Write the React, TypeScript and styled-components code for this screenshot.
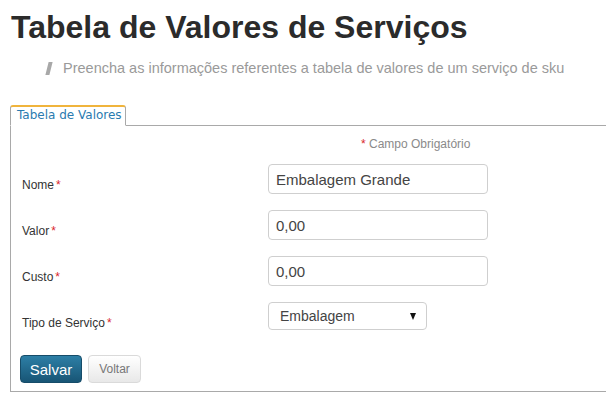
import React from "react";
import styled, { createGlobalStyle } from "styled-components";

const Global = createGlobalStyle`
  html, body { margin: 0; padding: 0; background: #fff; }
  body { font-family: "Liberation Sans", Arial, sans-serif; }
`;

const Page = styled.div`
  width: 606px;
  height: 401px;
  overflow: hidden;
  padding-left: 10px;
  box-sizing: border-box;
`;

const Title = styled.h1`
  margin: 8px 0 0 1px;
  font-size: 32px;
  line-height: 38px;
  font-weight: bold;
  color: #2b2b2b;
`;

const Subtitle = styled.div`
  display: flex;
  align-items: center;
  margin: 14px 0 0 37px;
  font-size: 14.5px;
  line-height: 16px;
  color: #9a9a9a;
`;

const Bar = styled.span`
  display: inline-block;
  width: 4px;
  height: 13px;
  background: #a8a8a8;
  transform: skewX(-14deg);
  margin-right: 12px;
`;

const Tabs = styled.div`
  display: flex;
  margin-top: 29px;
  border-bottom: 1px solid #a9a9a9;
`;

const Tab = styled.div`
  box-sizing: border-box;
  width: 116px;
  height: 21px;
  margin-bottom: -1px;
  border: 1px solid #a9a9a9;
  border-top: 2px solid #f0b43c;
  border-bottom: 1px solid #fff;
  border-radius: 3px 3px 0 0;
  background: #fff;
  font-family: "DejaVu Sans", Verdana, sans-serif;
  font-size: 12px;
  line-height: 16px;
  color: #2a7bb0;
  padding-left: 6px;
`;

const Panel = styled.div`
  border-left: 1px solid #a9a9a9;
  border-bottom: 1px solid #a9a9a9;
  height: 266px;
  box-sizing: border-box;
  padding: 11px 0 0 9px;
`;

const Required = styled.div`
  margin-left: 341px;
  font-size: 12px;
  line-height: 14px;
  color: #8a8a8a;
`;

const Star = styled.span`
  color: #d9262c;
`;

const Form = styled.div`
  display: flex;
  flex-direction: column;
  gap: 16px;
  margin-top: 13px;
`;

const Row = styled.div`
  display: flex;
  align-items: flex-start;
`;

const Label = styled.label`
  width: 248px;
  padding: 14px 0 0 2px;
  box-sizing: border-box;
  font-size: 12px;
  line-height: 14px;
  color: #333;
  ${Star} { margin-left: 2px; }
`;

const Input = styled.div<{ $w: number; $h: number }>`
  box-sizing: border-box;
  width: ${(p) => p.$w}px;
  height: ${(p) => p.$h}px;
  border: 1px solid #cfcfcf;
  border-radius: 4px;
  padding-left: 7px;
  display: flex;
  align-items: center;
  font-size: 15px;
  color: #444;
  background: #fff;
`;

const SelectBox = styled(Input)`
  padding: 0 10px 0 11px;
  justify-content: space-between;
  font-size: 14px;
`;

const Arrow = styled.span`
  width: 0;
  height: 0;
  border-left: 3px solid transparent;
  border-right: 3px solid transparent;
  border-top: 7px solid #111;
  margin-top: 1px;
`;

const Buttons = styled.div`
  display: flex;
  gap: 6px;
  margin-top: 25px;
`;

const Button = styled.div<{ $primary?: boolean }>`
  box-sizing: border-box;
  height: 28px;
  display: flex;
  align-items: center;
  justify-content: center;
  border-radius: 4px;
  ${(p) =>
    p.$primary
      ? `
    width: 62px;
    background: linear-gradient(#2d7fa6, #185575);
    border: 1px solid #164c69;
    color: #fff;
    font-size: 15px;
  `
      : `
    width: 53px;
    background: linear-gradient(#ffffff, #e8e8e8);
    border: 1px solid #dadada;
    color: #777;
    font-size: 12px;
  `}
`;

const fields = [
  { label: "Nome", value: "Embalagem Grande" },
  { label: "Valor", value: "0,00" },
  { label: "Custo", value: "0,00" },
];

export default function App() {
  return (
    <>
      <Global />
      <Page>
        <Title>Tabela de Valores de Serviços</Title>
        <Subtitle>
          <Bar />
          Preencha as informações referentes a tabela de valores de um serviço de sku
        </Subtitle>
        <Tabs>
          <Tab>Tabela de Valores</Tab>
        </Tabs>
        <Panel>
          <Required>
            <Star>*</Star> Campo Obrigatório
          </Required>
          <Form>
            {fields.map((f) => (
              <Row key={f.label}>
                <Label>
                  {f.label}
                  <Star>*</Star>
                </Label>
                <Input $w={220} $h={30}>{f.value}</Input>
              </Row>
            ))}
            <Row>
              <Label>
                Tipo de Serviço
                <Star>*</Star>
              </Label>
              <SelectBox $w={159} $h={28}>
                Embalagem
                <Arrow />
              </SelectBox>
            </Row>
          </Form>
          <Buttons>
            <Button $primary>Salvar</Button>
            <Button>Voltar</Button>
          </Buttons>
        </Panel>
      </Page>
    </>
  );
}
